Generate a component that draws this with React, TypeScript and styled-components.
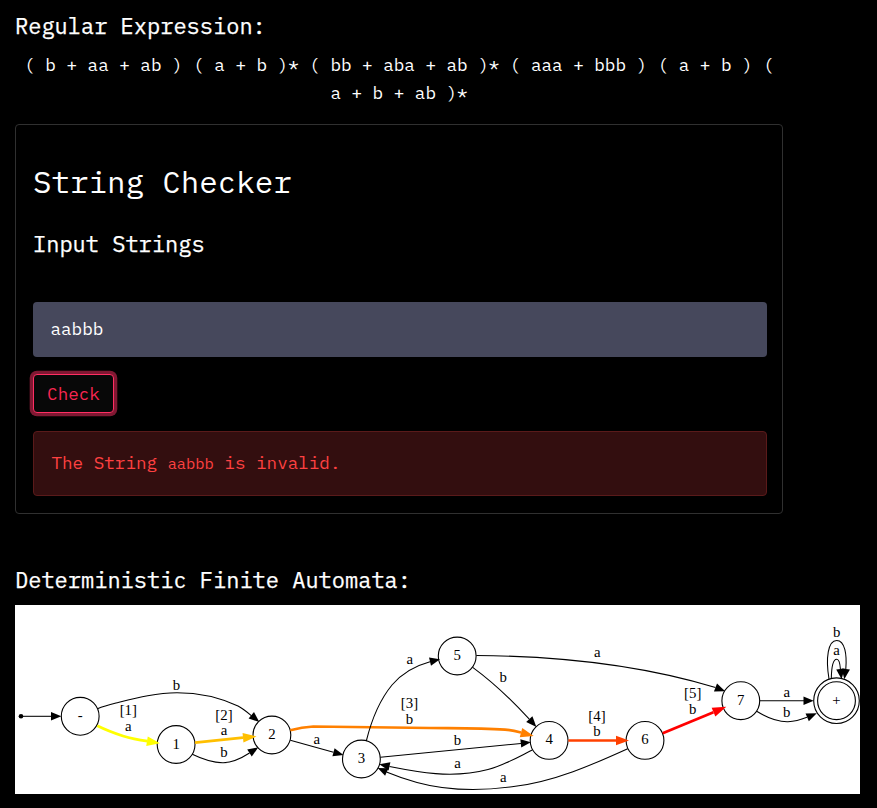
import React from "react";
import styled, { createGlobalStyle } from "styled-components";

const GlobalStyle = createGlobalStyle`
  * { box-sizing: border-box; }
  body {
    margin: 0;
    background: #000;
    color: #fff;
    font-family: "IBM Plex Mono", "Liberation Mono", monospace;
    font-size: 17.6px;
    line-height: 28px;
  }
`;

const Page = styled.main`
  width: 877px;
  height: 808px;
  padding: 11px 17px 14px 15px;
  overflow: hidden;
`;

const Column = styled.div`
  width: 768px;
`;

const Heading = styled.h3`
  margin: 0;
  font-size: 22px;
  line-height: 30px;
  font-weight: 400;
  -webkit-text-stroke: 0.25px #fff;
`;

const Expression = styled.p`
  margin: 10px 0 17px;
  text-align: center;
`;

const Card = styled.section`
  height: 390px;
  padding: 40px 15px 17px 17px;
  border: 1px solid #303030;
  border-radius: 4px;
`;

const CardTitle = styled.h2`
  margin: 0 0 32px;
  font-size: 30.8px;
  line-height: 32px;
  font-weight: 400;
`;

const StringInput = styled.input`
  display: block;
  width: 734px;
  height: 55px;
  margin: 43px 0 17px;
  padding: 0 17.5px 2px;
  border: 0;
  border-radius: 4px;
  outline: none;
  background: #46485c;
  color: #fff;
  font: inherit;
`;

const CheckButton = styled.button`
  display: block;
  width: 81px;
  height: 39px;
  padding: 0;
  border: 1px solid #ff2e63;
  border-radius: 4px;
  background: #080808;
  box-shadow: 0 0 0 3.3px #7f1832;
  color: #f92652;
  font: inherit;
`;

const Alert = styled.div`
  width: 734px;
  height: 65px;
  margin-top: 18px;
  padding: 17px 17.5px;
  border: 1px solid #5a1a1a;
  border-radius: 4px;
  background: #330e0f;
  color: #ff4141;
`;

const Code = styled.code`
  font-family: inherit;
  font-size: 15.4px;
`;

const GraphSection = styled.section`
  margin-top: 51px;
`;

const Graph = styled.svg`
  display: block;
  width: 845px;
  height: 189px;
  margin-top: 10px;
  background: #fff;
  font-family: "Liberation Serif", serif;
  font-size: 14.8px;
  text-anchor: middle;
`;

type Point = [number, number];

interface EdgeData {
  d: string;
  tail: Point;
  tip: Point;
  color?: string;
}

const edges: EdgeData[] = [
  { d: "M21,716.3 L51,716.3", tail: [51, 716.3], tip: [61.3, 716.3] },
  { d: "M97.5,708.7 C104,706 110,704.5 116,703 C136,698 156,692.7 177,692.7 C199,692.7 221,698 238,706 C243,708.5 247,712 251.5,715.8", tail: [251.3, 715.3], tip: [259.3, 722] },
  { d: "M97.3,725.7 C106,730 114,733 123,736 C131,738.5 139,740 147.5,741.2", tail: [147, 741.2], tip: [160, 743.3], color: "#ffff00" },
  { d: "M195,742.7 L243,737.7", tail: [243, 737.7], tip: [256.5, 736.4], color: "#ffbf00" },
  { d: "M192.3,754.3 C202,759 213,763 223.5,762.7 C233,762.5 241,758.5 249.5,753", tail: [249.5, 753], tip: [258.3, 747.3] },
  { d: "M290.3,740.3 L333.5,752.2", tail: [333.5, 752.2], tip: [343.5, 754.9] },
  { d: "M290.3,730.3 C297,728.5 305,727 313.3,726.5 L430,728 C458,728.3 480,728 505,729.7 C510,730 516,731.2 521,732.5", tail: [521, 732.6], tip: [533.7, 736], color: "#ff8000" },
  { d: "M366.3,741 C371,722 378,702 392,685 C402,673 416,665.5 430,661.7", tail: [430, 661.7], tip: [440, 659.3] },
  { d: "M380.3,757.3 L521,743.4", tail: [520.8, 743.4], tip: [530.8, 742.3] },
  { d: "M532.3,750 C520,756 505,765 488,769.5 C452,779 417,772 389.5,766.5", tail: [389.5, 766.4], tip: [379.3, 764.2] },
  { d: "M472.7,667.3 C490,680 509,697 529.3,719.2", tail: [529.3, 719.2], tip: [536.4, 727] },
  { d: "M476.3,655.5 C556,656 641,665 715.5,687.5", tail: [715.5, 687.5], tip: [725.2, 691.3] },
  { d: "M568.3,740.5 L616,740.5", tail: [616, 740.5], tip: [629, 740.5], color: "#ff4000" },
  { d: "M627.7,748.7 C594,764 554,782 512,786.8 C466,793 437,788 417,782.5 C406,779.4 396,776 386.5,772", tail: [386.8, 772], tip: [377.7, 767.9] },
  { d: "M662.7,733.3 L713.5,712.2", tail: [713.5, 712.2], tip: [726.3, 706.8], color: "#ff0000" },
  { d: "M759.7,700.7 L804,700.7", tail: [803.5, 700.7], tip: [813.7, 700.7] },
  { d: "M756.7,711.3 C766,717 777,722 788,721.7 C795,721.5 801,719.7 807,717.3", tail: [807.2, 717.3], tip: [816.8, 713.2] },
  { d: "M831.3,678.7 C831.5,667 833,659.3 836.7,659.3 C839,659.3 840,663 840.4,669", tail: [840.4, 669], tip: [841.6, 679.3] },
  { d: "M829,679 C825.5,658 828,640.4 836.7,640.4 C845,640.4 847,655 845.8,669", tail: [845.8, 669], tip: [844.3, 679.3] },
];

const nodes: { x: number; y: number; label: string; accepting?: boolean }[] = [
  { x: 80.2, y: 716.3, label: "-" },
  { x: 176.1, y: 744.5, label: "1" },
  { x: 271.9, y: 735, label: "2" },
  { x: 361.4, y: 759, label: "3" },
  { x: 457.2, y: 656, label: "5" },
  { x: 549.1, y: 740.4, label: "4" },
  { x: 645, y: 740.4, label: "6" },
  { x: 740.8, y: 700.7, label: "7" },
  { x: 836.5, y: 700.7, label: "+", accepting: true },
];

const labels: [string, number, number][] = [
  ["b", 176.5, 689.7],
  ["[1]", 128.3, 715.3],
  ["a", 128.3, 730.5],
  ["[2]", 224, 720.3],
  ["a", 224, 735.3],
  ["b", 224, 756.7],
  ["a", 316.8, 743.5],
  ["a", 409.8, 663.5],
  ["[3]", 409.5, 708.3],
  ["b", 409.5, 724],
  ["b", 457.5, 745],
  ["a", 457.5, 768.4],
  ["b", 503.3, 682],
  ["a", 597.3, 657.3],
  ["[4]", 597, 721.3],
  ["b", 597, 736],
  ["a", 503.3, 782.4],
  ["[5]", 692.7, 698.3],
  ["b", 692.7, 713.8],
  ["a", 786.7, 697.3],
  ["b", 786.7, 717.3],
  ["b", 836.6, 636.8],
  ["a", 836.6, 655.3],
];

function arrowHead([x1, y1]: Point, [x2, y2]: Point, half: number) {
  const length = Math.hypot(x2 - x1, y2 - y1);
  const nx = (-(y2 - y1) / length) * half;
  const ny = ((x2 - x1) / length) * half;
  return `${x1 + nx},${y1 + ny} ${x2},${y2} ${x1 - nx},${y1 - ny}`;
}

function Edge({ d, tail, tip, color }: EdgeData) {
  return (
    <g>
      <path d={d} fill="none" stroke={color ?? "#000"} strokeWidth={color ? 2.7 : 1.05} />
      <polygon points={arrowHead(tail, tip, color ? 4.8 : 4.2)} fill={color ?? "#000"} />
    </g>
  );
}

function Automaton() {
  return (
    <Graph viewBox="15 605 845 189" role="img" aria-label="Deterministic finite automaton">
      <circle cx="21" cy="716.3" r="2.3" />
      {nodes.map((n) => (
        <g key={n.label}>
          <circle cx={n.x} cy={n.y} r="18.9" fill="none" stroke="#000" strokeWidth="1.1" />
          {n.accepting && <circle cx={n.x} cy={n.y} r="22.8" fill="none" stroke="#000" strokeWidth="1.1" />}
          <text x={n.x} y={n.y + 4}>{n.label}</text>
        </g>
      ))}
      {edges.map((e) => <Edge key={e.d} {...e} />)}
      {labels.map(([text, x, y]) => <text key={`${x}-${y}`} x={x} y={y}>{text}</text>)}
    </Graph>
  );
}

export default function App() {
  return (
    <Page>
      <GlobalStyle />
      <Column>
        <Heading>Regular Expression:</Heading>
        <Expression>
          ( b + aa + ab ) ( a + b )* ( bb + aba + ab )* ( aaa + bbb ) ( a + b ) ( a + b + ab )*
        </Expression>
        <Card>
          <CardTitle>String Checker</CardTitle>
          <Heading>Input Strings</Heading>
          <StringInput defaultValue="aabbb" aria-label="Input string" />
          <CheckButton type="button">Check</CheckButton>
          <Alert>
            The String <Code>aabbb</Code> is invalid.
          </Alert>
        </Card>
      </Column>
      <GraphSection>
        <Heading>Deterministic Finite Automata:</Heading>
        <Automaton />
      </GraphSection>
    </Page>
  );
}
